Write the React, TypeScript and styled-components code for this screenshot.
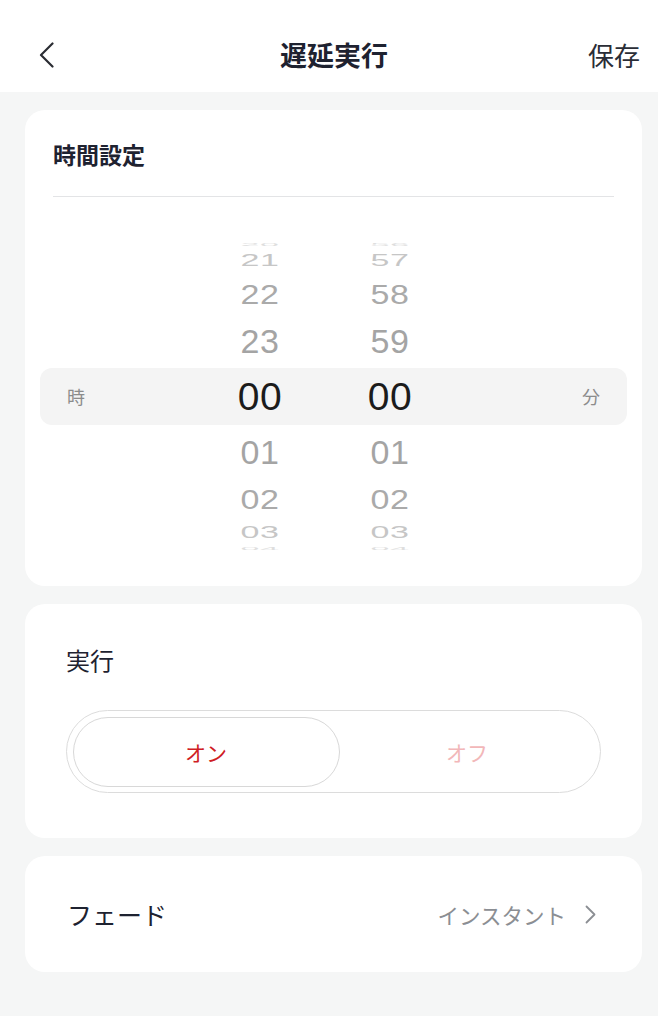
import React from "react";
import styled, { createGlobalStyle } from "styled-components";

const GlobalStyle = createGlobalStyle`
  html, body {
    margin: 0;
    padding: 0;
    background: #f5f6f6;
  }
  body {
    font-family: "Noto Sans CJK JP", "Noto Sans", sans-serif;
    -webkit-font-smoothing: antialiased;
  }
  * { box-sizing: border-box; }
`;

const Page = styled.div`
  min-height: 1016px;
  background: #f5f6f6;
  display: flex;
  flex-direction: column;
`;

const Header = styled.header`
  height: 92px;
  padding: 17px 18px 0 39px;
  background: #ffffff;
  display: grid;
  grid-template-columns: 1fr auto 1fr;
  align-items: center;
`;

const BackButton = styled.button`
  justify-self: start;
  border: 0;
  background: transparent;
  padding: 0;
  width: 16px;
  height: 26px;
  display: flex;
  align-items: center;
  cursor: pointer;
`;

const Title = styled.h1`
  margin: 0;
  padding-right: 11px;
  font-size: 27px;
  font-weight: 700;
  line-height: 36px;
  color: #1e2230;
`;

const SaveButton = styled.button`
  justify-self: end;
  border: 0;
  background: transparent;
  padding: 0;
  font-family: inherit;
  font-size: 26px;
  line-height: 36px;
  color: #2a2d36;
  cursor: pointer;
`;

const Content = styled.main`
  padding: 18px 16px 0 25px;
  display: flex;
  flex-direction: column;
  gap: 18px;
`;

const Card = styled.section<{ $pad: string }>`
  background: #ffffff;
  border-radius: 20px;
  padding: ${(p) => p.$pad};
`;

const CardTitle = styled.h2`
  margin: 0 13px;
  font-size: 23px;
  font-weight: 700;
  line-height: 32px;
  color: #1e2230;
`;

const Divider = styled.div`
  margin: 26px 13px 45px;
  height: 1px;
  background: #e3e4e6;
`;

const Wheel = styled.div`
  display: flex;
  flex-direction: column;
`;

const WheelRow = styled.div<{ $h: number; $selected: boolean }>`
  height: ${(p) => p.$h}px;
  display: grid;
  grid-template-columns: 72px 108px 80px 50px 80px 1fr 72px;
  grid-template-rows: ${(p) => p.$h}px;
  border-radius: 12px;
  background: ${(p) => (p.$selected ? "#f4f4f4" : "transparent")};
`;

const UnitLabel = styled.span<{ $col: number; $h: number }>`
  grid-column: ${(p) => p.$col};
  text-align: center;
  font-size: 18px;
  line-height: ${(p) => p.$h}px;
  color: #8c8c8c;
`;

const Digit = styled.span<{
  $col: number;
  $size: number;
  $h: number;
  $color: string;
  $scale: number;
}>`
  grid-column: ${(p) => p.$col};
  display: block;
  height: ${(p) => p.$h}px;
  text-align: center;
  font-family: "Liberation Sans", Arial, sans-serif;
  font-size: ${(p) => p.$size}px;
  line-height: ${(p) => p.$h}px;
  letter-spacing: 0.5px;
  color: ${(p) => p.$color};
  transform: scaleY(${(p) => p.$scale});
  white-space: nowrap;
`;

const SectionLabel = styled.div`
  font-size: 24px;
  line-height: 32px;
  color: #1e2230;
  margin-bottom: 34px;
`;

const Segmented = styled.div`
  height: 83px;
  border: 1.5px solid #dcdcdc;
  border-radius: 42px;
  padding: 5.5px;
  display: grid;
  grid-template-columns: 267px 1fr;
`;

const Segment = styled.button<{ $active: boolean }>`
  border: ${(p) => (p.$active ? "1.5px solid #d8d8d8" : "0")};
  border-radius: 36px;
  background: #ffffff;
  font-family: inherit;
  font-size: 21px;
  color: ${(p) => (p.$active ? "#cf1c24" : "#f2b7b9")};
  cursor: pointer;
  display: flex;
  align-items: center;
  justify-content: center;
  padding: 0;
`;

const FadeRow = styled.div`
  height: 116px;
  display: flex;
  align-items: center;
  justify-content: space-between;
`;

const FadeLabel = styled.span`
  font-size: 25px;
  color: #1e2230;
`;

const FadeValue = styled.span`
  display: flex;
  align-items: center;
  gap: 19px;
  font-size: 21.5px;
  color: #8b8e93;
`;

type Level = { h: number; size: number; color: string; scale: number };

const LEVELS: Level[] = [
  { h: 57, size: 39, color: "#1b1b1b", scale: 1 },
  { h: 54, size: 34, color: "#a4a4a4", scale: 1 },
  { h: 40, size: 34, color: "#aaaaaa", scale: 0.82 },
  { h: 27, size: 34, color: "#c6c6c6", scale: 0.5 },
  { h: 5, size: 34, color: "#dedede", scale: 0.12 },
];

const HOURS = ["20", "21", "22", "23", "00", "01", "02", "03", "04"];
const MINUTES = ["56", "57", "58", "59", "00", "01", "02", "03", "04"];

const ChevronLeft = () => (
  <svg width="16" height="26" viewBox="0 0 16 26" fill="none">
    <polyline
      points="13.5,1.5 2,13 13.5,24.5"
      stroke="#2b2d33"
      strokeWidth="2.2"
      strokeLinecap="round"
      strokeLinejoin="round"
    />
  </svg>
);

const ChevronRight = () => (
  <svg width="11" height="19" viewBox="0 0 11 19" fill="none">
    <polyline
      points="1.5,1.5 9.5,9.5 1.5,17.5"
      stroke="#8b8e93"
      strokeWidth="1.8"
      strokeLinecap="round"
      strokeLinejoin="round"
    />
  </svg>
);

export default function App() {
  const [on, setOn] = React.useState(true);
  return (
    <>
      <GlobalStyle />
      <Page>
        <Header>
          <BackButton aria-label="戻る">
            <ChevronLeft />
          </BackButton>
          <Title>遅延実行</Title>
          <SaveButton>保存</SaveButton>
        </Header>
        <Content>
          <Card $pad="28px 15px 35px">
            <CardTitle>時間設定</CardTitle>
            <Divider />
            <Wheel>
              {HOURS.map((h, i) => {
                const lv = LEVELS[Math.abs(i - 4)];
                const selected = i === 4;
                return (
                  <WheelRow key={i} $h={lv.h} $selected={selected}>
                    {selected && (
                      <UnitLabel $col={1} $h={lv.h}>
                        時
                      </UnitLabel>
                    )}
                    <Digit
                      $col={3}
                      $h={lv.h}
                      $size={lv.size}
                      $color={lv.color}
                      $scale={lv.scale}
                    >
                      {h}
                    </Digit>
                    <Digit
                      $col={5}
                      $h={lv.h}
                      $size={lv.size}
                      $color={lv.color}
                      $scale={lv.scale}
                    >
                      {MINUTES[i]}
                    </Digit>
                    {selected && (
                      <UnitLabel $col={7} $h={lv.h}>
                        分
                      </UnitLabel>
                    )}
                  </WheelRow>
                );
              })}
            </Wheel>
          </Card>
          <Card $pad="40px 41px 45px">
            <SectionLabel>実行</SectionLabel>
            <Segmented>
              <Segment $active={on} onClick={() => setOn(true)}>
                オン
              </Segment>
              <Segment $active={!on} onClick={() => setOn(false)}>
                オフ
              </Segment>
            </Segmented>
          </Card>
          <Card $pad="0 46px 0 42px">
            <FadeRow>
              <FadeLabel>フェード</FadeLabel>
              <FadeValue>
                インスタント
                <ChevronRight />
              </FadeValue>
            </FadeRow>
          </Card>
        </Content>
      </Page>
    </>
  );
}
